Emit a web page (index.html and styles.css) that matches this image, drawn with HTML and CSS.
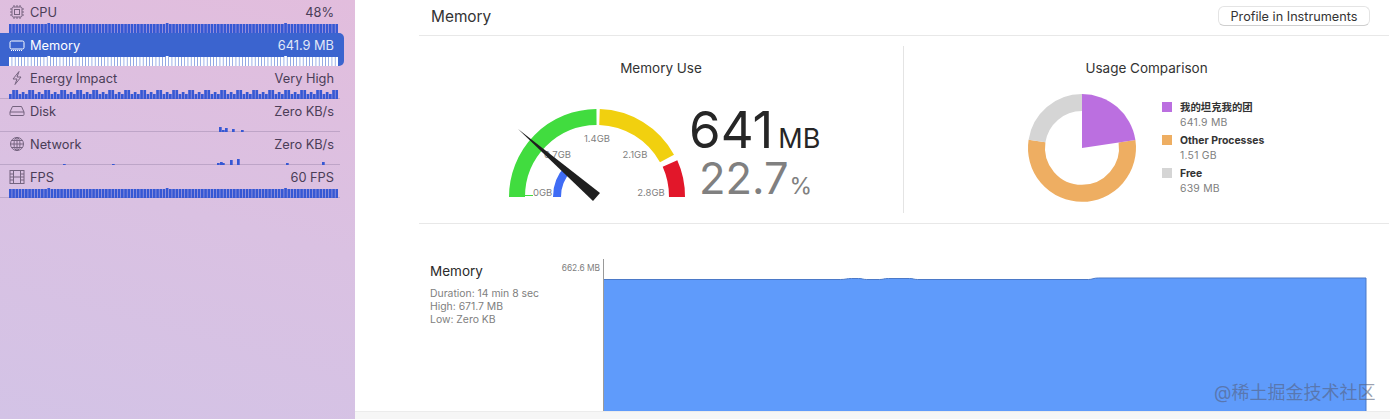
FILE: index.html
```html
<!DOCTYPE html>
<html lang="en">
<head>
    <meta charset="UTF-8">
    <meta name="viewport" content="width=device-width, initial-scale=1.0">
    <title>Memory Report</title>
    <link rel="stylesheet" href="styles.css">
</head>
<body>
    <aside class="sidebar">
        <div class="row">
            <div class="row-head">
                <svg class="row-icon" viewBox="0 0 16 16"><rect x="3" y="3" width="10" height="10" rx="1.5"/><rect x="5.5" y="5.5" width="5" height="5"/><path d="M5 1v2M8 1v2M11 1v2M5 13v2M8 13v2M11 13v2M1 5h2M1 8h2M1 11h2M13 5h2M13 8h2M13 11h2"/></svg>
                <span class="row-name">CPU</span>
                <span class="row-value">48%</span>
            </div>
            <div class="spark" data-kind="full"></div>
        </div>
        <div class="row selected">
            <div class="row-head">
                <svg class="row-icon" viewBox="0 0 16 16"><rect x="1" y="4" width="14" height="8" rx="1.5"/><path d="M2 13.500h12" stroke-dasharray="1 1"/></svg>
                <span class="row-name">Memory</span>
                <span class="row-value">641.9 MB</span>
            </div>
            <div class="spark" data-kind="full"></div>
        </div>
        <div class="row line">
            <div class="row-head">
                <svg class="row-icon" viewBox="0 0 16 16"><path d="M10 1.500 4 9h4l-2 5.500L12 7H8z"/></svg>
                <span class="row-name">Energy Impact</span>
                <span class="row-value">Very High</span>
            </div>
            <div class="spark" data-kind="energy"></div>
        </div>
        <div class="row line">
            <div class="row-head">
                <svg class="row-icon" viewBox="0 0 16 16"><path d="M1 9 3.500 3.500h9L15 9M1 9v2.500a1 1 0 0 0 1 1h12a1 1 0 0 0 1-1V9z"/></svg>
                <span class="row-name">Disk</span>
                <span class="row-value">Zero KB/s</span>
            </div>
            <div class="spark" data-kind="disk"></div>
        </div>
        <div class="row line">
            <div class="row-head">
                <svg class="row-icon" viewBox="0 0 16 16"><circle cx="8" cy="8" r="6.500"/><ellipse cx="8" cy="8" rx="3" ry="6.500"/><path d="M8 1.500v13M1.500 8h13M2.500 4.500h11M2.500 11.500h11"/></svg>
                <span class="row-name">Network</span>
                <span class="row-value">Zero KB/s</span>
            </div>
            <div class="spark" data-kind="network"></div>
        </div>
        <div class="row line">
            <div class="row-head">
                <svg class="row-icon" viewBox="0 0 16 16"><rect x="1" y="1.500" width="14" height="13"/><path d="M4.500 1.500v13M11.500 1.500v13M1 8h3.500M11.500 8H15M1 5h3.500M11.500 5H15M1 11h3.500M11.500 11H15M4.500 8h7"/></svg>
                <span class="row-name">FPS</span>
                <span class="row-value">60 FPS</span>
            </div>
            <div class="spark" data-kind="fps"></div>
        </div>
    </aside>

    <main class="main">
        <div class="content">
            <header class="header">
                <h1 class="header-title">Memory</h1>
                <button class="profile-btn">Profile in Instruments</button>
            </header>

            <section class="overview">
                <div class="panel panel-use">
                    <h2 class="panel-title">Memory Use</h2>
                    <div class="use-body">
                        <svg class="gauge" viewBox="505 105 186 100">
                            <text class="tick" x="597" y="142" text-anchor="middle">1.4GB</text>
                            <text class="tick" x="571" y="158" text-anchor="end">0.7GB</text>
                            <text class="tick" x="635" y="158" text-anchor="middle">2.1GB</text>
                            <text class="tick" x="533" y="196">0GB</text>
                            <text class="tick" x="651" y="196" text-anchor="middle">2.8GB</text>
                            <path class="arc" stroke="#41dc3f" d="M517 197A80 80 0 0 1 596.500 117"/>
                            <path class="arc" stroke="#f1d00f" d="M599.500 117A80 80 0 0 1 667 158.500"/>
                            <path class="arc" stroke="#e2172a" d="M670 163.500A80 80 0 0 1 677 197"/>
                            <path class="arc-thin" d="M525 195.500h8"/>
                            <path class="arc-blue" d="M557 197A40 40 0 0 1 568 169"/>
                            <polygon class="needle" points="518,129 600,193 593,201"/>
                        </svg>
                        <div class="readout">
                            <div class="readout-top">641<span class="unit">MB</span></div>
                            <div class="readout-pct">22.7<span class="unit-pct">%</span></div>
                        </div>
                    </div>
                </div>

                <div class="panel panel-usage">
                    <h2 class="panel-title">Usage Comparison</h2>
                    <div class="usage-body">
                        <svg class="donut" viewBox="1026 92 112 112">
                            <path class="ring" stroke="#eeae62" d="M1127 141.200A45.500 45.500 0 1 1 1037 141"/>
                            <path class="ring" stroke="#d5d5d5" d="M1037 141A45.500 45.500 0 0 1 1082 102.500"/>
                            <path fill="#bb6fe0" d="M1082 148V94A54 54 0 0 1 1135.400 140z"/>
                        </svg>
                        <ul class="legend">
                            <li class="legend-item">
                                <span class="swatch swatch-app"></span>
                                <div>
                                    <div class="legend-name">我的坦克我的团</div>
                                    <div class="legend-size">641.9 MB</div>
                                </div>
                            </li>
                            <li class="legend-item">
                                <span class="swatch swatch-other"></span>
                                <div>
                                    <div class="legend-name">Other Processes</div>
                                    <div class="legend-size">1.51 GB</div>
                                </div>
                            </li>
                            <li class="legend-item">
                                <span class="swatch swatch-free"></span>
                                <div>
                                    <div class="legend-name">Free</div>
                                    <div class="legend-size">639 MB</div>
                                </div>
                            </li>
                        </ul>
                    </div>
                </div>
            </section>

            <section class="history">
                <div class="history-info">
                    <h3 class="history-title">Memory</h3>
                    <p class="history-line">Duration: 14 min 8 sec</p>
                    <p class="history-line">High: 671.7 MB</p>
                    <p class="history-line">Low: Zero KB</p>
                </div>
                <div class="history-scale">662.6 MB</div>
                <svg class="history-chart" viewBox="0 0 764 152" preserveAspectRatio="none">
                    <path fill="#5f9bfb" d="M0 20.500H237C242 20.500 243 19.500 248 19.500H255C259 19.500 259 20.500 263 20.500H276C280 20.500 280 19.500 285 19.500H306C310 19.500 310 20.500 314 20.500H485C489 20.500 490 19 495 19H763V152H0z"/>
                    <path class="chart-edge" d="M0 20.500H237C242 20.500 243 19.500 248 19.500H255C259 19.500 259 20.500 263 20.500H276C280 20.500 280 19.500 285 19.500H306C310 19.500 310 20.500 314 20.500H485C489 20.500 490 19 495 19H763V152"/>
                </svg>
            </section>
        </div>
        <div class="footer-strip"></div>
    </main>

    <div class="watermark">@稀土掘金技术社区</div>

    <script src="spark.js"></script>
</body>
</html>
```

FILE: styles.css
```css
* {
    box-sizing: border-box;
}

body {
    margin: 0;
    height: 419px;
    overflow: hidden;
    display: flex;
    font-family: Inter, "Noto Sans CJK SC", sans-serif;
    background-color: #fff;
    color: #2b2b2b;
}

h1, h2, h3, p, ul {
    margin: 0;
    padding: 0;
    font-weight: 400;
}

/* left list */
.sidebar {
    width: 355px;
    flex-shrink: 0;
    background: linear-gradient(195deg, #e2bddd 0%, #dac1e2 50%, #d3c3e6 100%);
}

.row {
    width: 340px;
    height: 33px;
    color: #4a3d57;
}

.row.line {
    box-shadow: inset 0 -1px 0 rgba(70, 60, 100, 0.2);
}

.row.selected {
    width: 344px;
    background-color: #3b64cf;
    border-radius: 0 5px 5px 0;
    color: #fff;
}

.row-head {
    height: 23px;
    padding: 1px 6px 0 9px;
    display: flex;
    align-items: center;
    font-size: 12.8px;
}

.selected .row-head {
    padding-right: 10px;
}

.row-icon {
    width: 16px;
    height: 16px;
    margin-right: 5px;
    fill: none;
    stroke: currentColor;
    stroke-width: 1;
    opacity: 0.7;
}

.selected .row-icon {
    opacity: 1;
}

.row-value {
    margin-left: auto;
}

.selected .row-value {
    opacity: 0.85;
}

.spark {
    width: 329px;
    height: 10px;
    margin-left: 9px;
}

.spark-svg {
    display: block;
    width: 329px;
    height: 10px;
    fill: #3658d4;
}

.selected .spark-svg {
    fill: #fff;
}

/* right side */
.main {
    flex: 1;
    display: flex;
    flex-direction: column;
    min-width: 0;
}

.content {
    flex: 1;
    padding: 0 1px 0 64px;
}

.footer-strip {
    height: 8px;
    background-color: #f6f6f6;
    border-top: 1px solid #ececec;
}

.header {
    height: 36px;
    padding: 0 19px 3px 12px;
    display: flex;
    align-items: center;
    justify-content: space-between;
    border-bottom: 1px solid #e8e8e8;
}

.header-title {
    font-size: 15.4px;
    color: #333;
}

.profile-btn {
    width: 152px;
    height: 20px;
    padding: 0;
    border: 1px solid #e4e4e4;
    border-bottom-color: #cfcfcf;
    border-radius: 6px;
    background-color: #fff;
    font-family: inherit;
    font-size: 12.7px;
    color: #333;
}

.overview {
    height: 188px;
    padding: 10px 0;
    display: grid;
    grid-template-columns: 485px 1fr;
    border-bottom: 1px solid #e8e8e8;
}

.panel-use {
    border-right: 1px solid #e4e4e4;
}

.panel-title {
    margin-top: 14px;
    font-size: 13.5px;
    line-height: 16px;
    text-align: center;
    color: #333;
}

.use-body {
    margin-top: 29px;
    padding-left: 86px;
    display: flex;
}

.gauge {
    width: 186px;
    height: 100px;
    flex-shrink: 0;
}

.arc, .arc-thin, .arc-blue, .ring {
    fill: none;
}

.arc {
    stroke-width: 16;
}

.arc-thin {
    stroke: #41dc3f;
    stroke-width: 1;
}

.arc-blue {
    stroke: #3f6cf5;
    stroke-width: 8;
}

.tick {
    font-size: 9.5px;
    fill: #7f7f7f;
}

.needle {
    fill: #1f1f1f;
}

.readout {
    margin-left: -2px;
    white-space: nowrap;
}

.readout-top {
    height: 50px;
    font-size: 51px;
    line-height: 50px;
    color: #262626;
}

.unit {
    margin-left: 5px;
    font-size: 27px;
}

.readout-pct {
    padding-left: 10px;
    font-size: 43.5px;
    line-height: 47px;
    color: #808080;
}

.unit-pct {
    margin-left: 1px;
    font-size: 23px;
}

.usage-body {
    padding-left: 122px;
    display: flex;
    align-items: flex-start;
}

.donut {
    width: 112px;
    height: 112px;
    margin-top: 16px;
    flex-shrink: 0;
}

.ring {
    stroke-width: 17;
}

.legend {
    list-style: none;
    margin: 25px 0 0 24px;
}

.legend-item {
    height: 33px;
    display: flex;
    align-items: flex-start;
    gap: 8px;
}

.swatch {
    width: 10px;
    height: 10px;
    margin-top: 1px;
    flex-shrink: 0;
}

.swatch-app {
    background-color: #bb6fe0;
}

.swatch-other {
    background-color: #eeae62;
}

.swatch-free {
    background-color: #d5d5d5;
}

.legend-name {
    font-size: 10.4px;
    font-weight: 700;
    line-height: 14px;
    color: #333;
}

.legend-size {
    font-size: 10.4px;
    line-height: 16px;
    letter-spacing: 0.25px;
    color: #808080;
}

.history {
    height: 187px;
    padding: 35px 0 0 11px;
    display: flex;
    position: relative;
}

.history-info {
    width: 119px;
    padding-top: 4px;
}

.history-title {
    font-size: 13.5px;
    line-height: 16px;
    margin-bottom: 8px;
    color: #2b2b2b;
}

.history-line {
    font-size: 10.4px;
    line-height: 13px;
    color: #808080;
}

.history-scale {
    width: 54px;
    padding: 3px 3px 0 0;
    font-size: 8.4px;
    line-height: 12px;
    text-align: right;
    color: #808080;
    white-space: nowrap;
}

.history-chart {
    width: 764px;
    height: 152px;
    border-left: 1px solid #9a9a9a;
}

.chart-edge {
    fill: none;
    stroke: #4a78c8;
    stroke-width: 1;
}

.watermark {
    position: absolute;
    left: 1214px;
    top: 382px;
    font-size: 18px;
    line-height: 22px;
    color: rgba(85, 95, 125, 0.6);
    white-space: nowrap;
}
```

FILE: spark.js
```js
// bar height per x position, in a 10px tall strip
const SVG_NS = 'http://www.w3.org/2000/svg';
const sparse = {
    disk: { 210: 5, 213: 2, 216: 4, 223: 3, 232: 2 },
    network: { 54: 1, 103: 1, 208: 2, 211: 3, 213: 2, 221: 5, 228: 6, 277: 2, 313: 3 }
};

function addBar(svg, x, height) {
    const bar = document.createElementNS(SVG_NS, 'rect');
    bar.setAttribute('x', x);
    bar.setAttribute('y', 10 - height);
    bar.setAttribute('width', 2.7);
    bar.setAttribute('height', height);
    svg.appendChild(bar);
}

document.querySelectorAll('.spark').forEach(function (spark) {
    const kind = spark.dataset.kind;
    const svg = document.createElementNS(SVG_NS, 'svg');
    svg.setAttribute('class', 'spark-svg');
    spark.appendChild(svg);

    if (sparse[kind]) {
        Object.keys(sparse[kind]).forEach(function (x) {
            addBar(svg, Number(x), sparse[kind][x]);
        });
        return;
    }

    for (let i = 0; i < 103; i++) {
        let height = 9;
        if (kind === 'energy') {
            height = 5 + ((i * i * 3 + i) % 5);
        } else if (i % 37 === 12) {
            height = 10;
        }
        addBar(svg, i * 3.2, height);
    }
});
```
